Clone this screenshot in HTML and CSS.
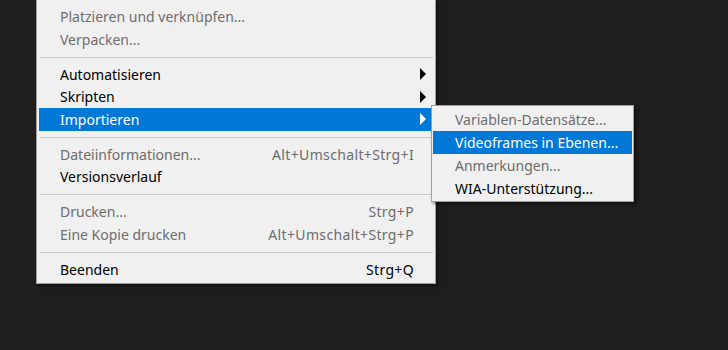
FILE: index.html
```html
<!doctype html>
<html lang="de">
<head>
    <meta charset="UTF-8">
    <title>Datei</title>
    <link rel="stylesheet" href="styles.css">
</head>
<body>
<div class="stage">
    <ul class="menu">
        <li class="item off"><span class="label">Platzieren und verknüpfen...</span></li>
        <li class="item off"><span class="label">Verpacken...</span></li>
        <li class="sep"></li>
        <li class="item sub"><span class="label">Automatisieren</span><span class="arrow"></span></li>
        <li class="item sub"><span class="label">Skripten</span><span class="arrow"></span></li>
        <li class="item sub active">
            <span class="label">Importieren</span><span class="arrow"></span>
            <!-- flyout -->
            <ul class="submenu">
                <li class="item off"><span class="label">Variablen-Datensätze...</span></li>
                <li class="item active"><span class="label">Videoframes in Ebenen...</span></li>
                <li class="item off"><span class="label">Anmerkungen...</span></li>
                <li class="item"><span class="label">WIA-Unterstützung...</span></li>
            </ul>
        </li>
        <li class="sep"></li>
        <li class="item off"><span class="label">Dateiinformationen...</span><span class="key">Alt+Umschalt+Strg+I</span></li>
        <li class="item"><span class="label">Versionsverlauf</span></li>
        <li class="sep"></li>
        <li class="item off"><span class="label">Drucken...</span><span class="key">Strg+P</span></li>
        <li class="item off"><span class="label">Eine Kopie drucken</span><span class="key">Alt+Umschalt+Strg+P</span></li>
        <li class="sep"></li>
        <li class="item"><span class="label">Beenden</span><span class="key">Strg+Q</span></li>
    </ul>
</div>
</body>
</html>
```

FILE: styles.css
```css
* {
    margin: 0;
    padding: 0;
    box-sizing: border-box;
}

html, body {
    height: 100%;
}

body {
    background: #1e1e1e;
    font-family: "Noto Sans", "Open Sans", sans-serif;
    font-size: 14px;
    color: #000;
    overflow: hidden;
}

ul, li {
    list-style: none;
}

.stage {
    padding-left: 36px;
}

.menu {
    width: 400px;
    background: #f0f0f0;
    border: 1px solid #a0a0a0;
    border-top: none;
    padding: 5.5px 2px 2px;
    box-shadow: 2px 2px 3px rgba(0, 0, 0, .45);
}

.item {
    position: relative;
    display: flex;
    align-items: center;
    height: 22.5px;
    padding-left: 21px;
    padding-right: 19px;
    white-space: nowrap;
}

.item.off {
    color: #6d6d6d;
}

.item.active {
    background: #0078d7;
    color: #fff;
}

.key {
    margin-left: auto;
    letter-spacing: .35px;
}

.arrow {
    position: absolute;
    right: 7px;
    top: 50%;
    margin-top: -6px;
    width: 0;
    height: 0;
    border-top: 6px solid transparent;
    border-bottom: 6px solid transparent;
    border-left: 6px solid #000;
}

.active > .arrow {
    border-left-color: #fff;
}

.sep {
    height: 1px;
    background: #c9c9c9;
    margin: 6px 0 5.5px 1px;
}

.submenu {
    position: absolute;
    left: 392px;
    top: -3px;
    width: 203px;
    background: #f0f0f0;
    color: #000;
    border: 1px solid #a0a0a0;
    padding: 2px 1px 1px;
    box-shadow: 2px 2px 3px rgba(0, 0, 0, .5);
    z-index: 1;
}

.submenu .item {
    height: 23px;
    padding-left: 22px;
    padding-right: 10px;
}

.submenu .item.off {
    color: #6d6d6d;
}

.submenu .item.active {
    color: #fff;
}
```
